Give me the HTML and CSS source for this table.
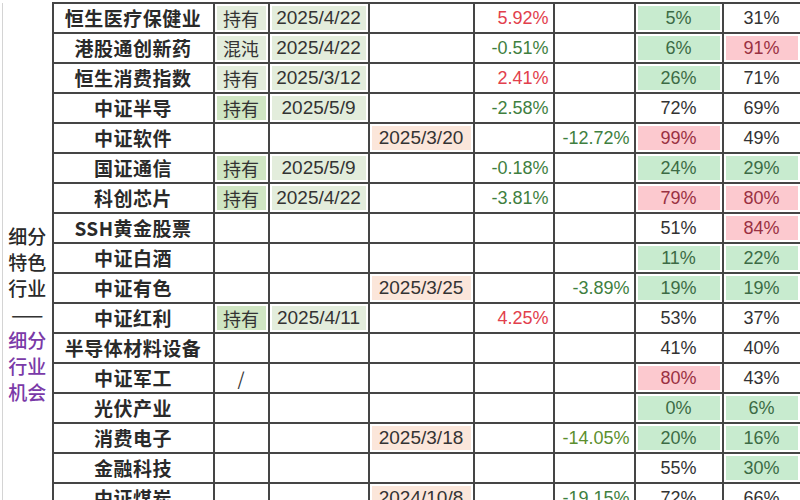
FILE: index.html
```html
<!DOCTYPE html>
<html lang="zh-CN">
<head>
<meta charset="utf-8">
<title>行业数据</title>
<link rel="stylesheet" href="styles.css">
</head>
<body>
<div class="sheet">
<table class="grid">
<colgroup>
<col class="c-side"><col class="c-name"><col class="c-hold"><col class="c-date"><col class="c-sell">
<col class="c-pct"><col class="c-pct2"><col class="c-q1"><col class="c-q2">
</colgroup>
<tbody>
<tr>
<td class="side" rowspan="17"><div class="side-text"><span>细分</span><span>特色</span><span>行业</span><span class="dash">——</span><span class="purple">细分</span><span class="purple">行业</span><span class="purple">机会</span></div></td>
<td class="name">恒生医疗保健业</td><td class="hold pale">持有</td><td class="date pale">2025/4/22</td><td></td><td class="pct up">5.92%</td><td></td><td class="q good">5%</td><td class="q">31%</td>
</tr>
<tr><td class="name">港股通创新药</td><td class="hold pale">混沌</td><td class="date pale">2025/4/22</td><td></td><td class="pct down">-0.51%</td><td></td><td class="q good">6%</td><td class="q bad">91%</td></tr>
<tr><td class="name">恒生消费指数</td><td class="hold pale">持有</td><td class="date pale">2025/3/12</td><td></td><td class="pct up">2.41%</td><td></td><td class="q good">26%</td><td class="q">71%</td></tr>
<tr><td class="name">中证半导</td><td class="hold green">持有</td><td class="date pale">2025/5/9</td><td></td><td class="pct down">-2.58%</td><td></td><td class="q">72%</td><td class="q">69%</td></tr>
<tr><td class="name">中证软件</td><td></td><td></td><td class="date peach">2025/3/20</td><td></td><td class="pct down">-12.72%</td><td class="q bad">99%</td><td class="q">49%</td></tr>
<tr><td class="name">国证通信</td><td class="hold green">持有</td><td class="date pale">2025/5/9</td><td></td><td class="pct down">-0.18%</td><td></td><td class="q good">24%</td><td class="q good">29%</td></tr>
<tr><td class="name">科创芯片</td><td class="hold green">持有</td><td class="date pale">2025/4/22</td><td></td><td class="pct down">-3.81%</td><td></td><td class="q bad">79%</td><td class="q bad">80%</td></tr>
<tr><td class="name">SSH黄金股票</td><td></td><td></td><td></td><td></td><td></td><td class="q">51%</td><td class="q bad">84%</td></tr>
<tr><td class="name">中证白酒</td><td></td><td></td><td></td><td></td><td></td><td class="q good">11%</td><td class="q good">22%</td></tr>
<tr><td class="name">中证有色</td><td></td><td></td><td class="date peach">2025/3/25</td><td></td><td class="pct down">-3.89%</td><td class="q good">19%</td><td class="q good">19%</td></tr>
<tr><td class="name">中证红利</td><td class="hold green">持有</td><td class="date pale">2025/4/11</td><td></td><td class="pct up">4.25%</td><td></td><td class="q">53%</td><td class="q">37%</td></tr>
<tr><td class="name">半导体材料设备</td><td></td><td></td><td></td><td></td><td></td><td class="q">41%</td><td class="q">40%</td></tr>
<tr><td class="name">中证军工</td><td class="hold">/</td><td></td><td></td><td></td><td></td><td class="q bad">80%</td><td class="q">43%</td></tr>
<tr><td class="name">光伏产业</td><td></td><td></td><td></td><td></td><td></td><td class="q good">0%</td><td class="q good">6%</td></tr>
<tr><td class="name">消费电子</td><td></td><td></td><td class="date peach">2025/3/18</td><td></td><td class="pct down lime">-14.05%</td><td class="q good">20%</td><td class="q good">16%</td></tr>
<tr><td class="name">金融科技</td><td></td><td></td><td></td><td></td><td></td><td class="q">55%</td><td class="q good">30%</td></tr>
<tr><td class="name">中证煤炭</td><td></td><td></td><td class="date peach">2024/10/8</td><td></td><td class="pct down">-19.15%</td><td class="q">72%</td><td class="q">66%</td></tr>
</tbody>
</table>
</div>
</body>
</html>
```

FILE: styles.css
```css
html, body {
  margin: 0;
  padding: 0;
  background: #fff;
  overflow: hidden;
}

.sheet {
  padding: 2px 0 0 2px;
  width: 800px;
  height: 500px;
  overflow: hidden;
  box-sizing: border-box;
}

.grid {
  border-collapse: collapse;
  table-layout: fixed;
  width: 798px;
  font-family: "Liberation Sans", "Noto Sans CJK SC", sans-serif;
  color: #333;
}

.c-side { width: 50px; }
.c-name { width: 161px; }
.c-hold { width: 55px; }
.c-date { width: 100px; }
.c-sell { width: 105px; }
.c-pct { width: 80px; }
.c-pct2 { width: 81px; }
.c-q1 { width: 88px; }
.c-q2 { width: 78px; }

.grid td {
  border: 2px solid #454545;
  height: 28px;
  padding: 0 4px;
  white-space: nowrap;
  overflow: hidden;
  text-align: center;
  vertical-align: middle;
  font-size: 18px;
  line-height: 26px;
}

.grid td.side {
  border-top: none;
  border-bottom: none;
  border-left: 1px solid #d4d4d4;
  vertical-align: top;
  padding: 0;
}

.side-text {
  display: flex;
  flex-direction: column;
  align-items: center;
  padding-top: 220px;
  font-family: "Noto Sans CJK SC", sans-serif;
  font-size: 19px;
  font-weight: 500;
  line-height: 26px;
  color: #2a2a2a;
}

.side-text .dash {
  letter-spacing: 0;
  color: #333;
}

.side-text .purple {
  color: #7a3aa8;
}

.grid td.name {
  font-family: "Noto Sans CJK SC", sans-serif;
  font-weight: 700;
  font-size: 19px;
  letter-spacing: 0.5px;
  color: #2a2a2a;
}

.grid td.hold {
  font-family: "Noto Sans CJK SC", sans-serif;
  font-size: 18px;
  color: #333;
  padding: 0;
}

.grid td.date {
  font-size: 19px;
  color: #333;
  padding: 0;
}

.grid td.pale {
  background: #e3eddc;
  box-shadow: inset 0 0 0 2px #fff;
}

.grid td.green {
  background: #d0e6c3;
  box-shadow: inset 0 0 0 2px #fff;
}

.grid td.peach {
  background: #fbe6da;
  box-shadow: inset 0 0 0 2px #fff;
}

.grid td.pct {
  text-align: right;
  padding-right: 4px;
}

.grid td.up { color: #e2404c; }
.grid td.down { color: #3f7f3f; }
.grid td.lime { color: #5c8f2e; }

.grid td.q {
  color: #333;
  padding: 0;
}

.grid td.good {
  background: #c8ebcf;
  color: #3c6b45;
  box-shadow: inset 0 0 0 2px #fff;
}

.grid td.bad {
  background: #fcc9cf;
  color: #9a3142;
  box-shadow: inset 0 0 0 2px #fff;
}
```
